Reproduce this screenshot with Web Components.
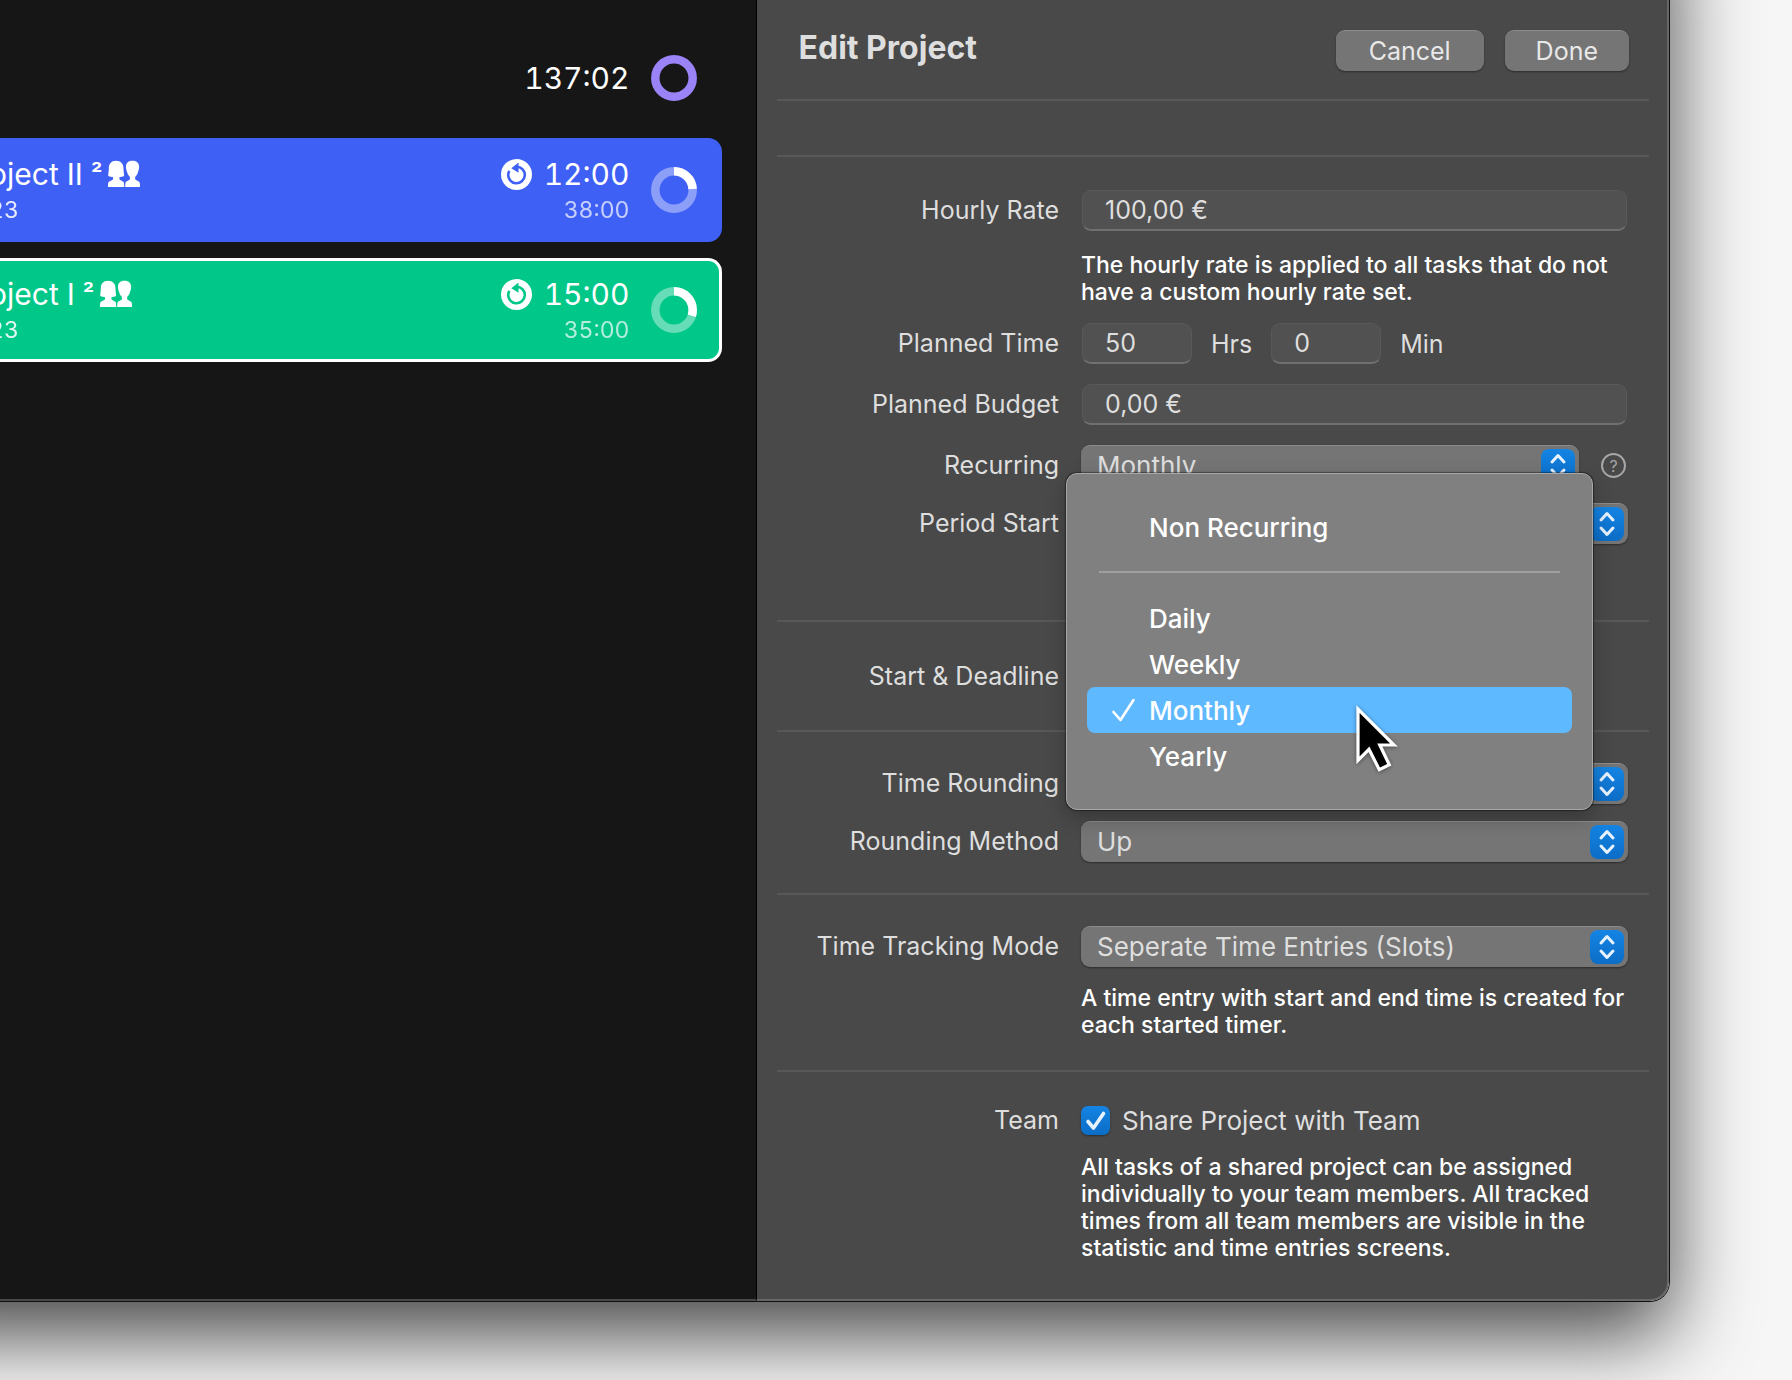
<!DOCTYPE html>
<html lang="en">
<head>
<meta charset="utf-8">
<title>Edit Project</title>
<style>
body {
  margin: 0;
  min-height: 100vh;
  overflow: hidden;
  background: #f6f6f6;
  color: #dedede;
  font-family: Inter, "Liberation Sans", sans-serif;
  font-size: 25px;
}
</style>
</head>
<body>
<app-window>
  <project-list slot="list">
    <total-time time="137:02"></total-time>
    <project-card name="oject II" count="²" date="23" time="12:00" left="38:00" progress="24" color="#3f60f5"></project-card>
    <project-card name="oject I" count="²" date="23" time="15:00" left="35:00" progress="30" color="#01c788" selected></project-card>
  </project-list>
  <edit-panel slot="panel" heading="Edit Project">
    <form-section class="blank"></form-section>
    <form-section class="rates">
      <text-row label="Hourly Rate" value="100,00 €">The hourly rate is applied to all tasks that do not have a custom hourly rate set.</text-row>
      <time-row label="Planned Time" hours="50" minutes="0"></time-row>
      <text-row label="Planned Budget" value="0,00 €"></text-row>
      <select-row label="Recurring" value="Monthly" help>
        <popup-menu slot="menu">
          <menu-item>Non Recurring</menu-item>
          <hr>
          <menu-item>Daily</menu-item>
          <menu-item>Weekly</menu-item>
          <menu-item checked>Monthly</menu-item>
          <menu-item>Yearly</menu-item>
        </popup-menu>
      </select-row>
      <select-row label="Period Start" value=""></select-row>
    </form-section>
    <form-section class="dates">
      <form-row label="Start &amp; Deadline"></form-row>
    </form-section>
    <form-section>
      <select-row label="Time Rounding" value=""></select-row>
      <select-row label="Rounding Method" value="Up"></select-row>
    </form-section>
    <form-section>
      <select-row label="Time Tracking Mode" value="Seperate Time Entries (Slots)">A time entry with start and end time is created for each started timer.</select-row>
    </form-section>
    <form-section class="team">
      <check-row label="Team" text="Share Project with Team">All tasks of a shared project can be assigned individually to your team members. All tracked times from all team members are visible in the statistic and time entries screens.</check-row>
    </form-section>
  </edit-panel>
</app-window>

<script>
class AppWindow extends HTMLElement {
  constructor() {
    super();
    this.attachShadow({ mode: 'open' }).innerHTML = `
<style>
/* the window runs past the top left corner of the screen */
:host {
  --bleed: 100px;
  display: grid;
  grid-template-columns: 857fr 913fr;
  margin: calc(0px - var(--bleed)) 122px 0 calc(0px - var(--bleed));
  border: 1px solid #111;
  border-width: 0 1px 1px 0;
  border-radius: 0 0 20px 20px;
  box-sizing: border-box;
  box-shadow: 0 33px 82px rgba(0, 0, 0, 0.72);
}

.list {
  padding: var(--bleed) 0 0 var(--bleed);
  background: #161616;
  border-right: 1px solid #000;
  border-bottom: 2px solid #484848;
}

.panel {
  padding-top: var(--bleed);
  background: #494949;
  border-right: 2px solid #666;
  border-bottom: 2px solid #666;
  border-radius: 0 0 19px 0;
}
</style>
<div class="list"><slot name="list"></slot></div>
<div class="panel"><slot name="panel"></slot></div>
`;
  }
}

class ProjectList extends HTMLElement {
  constructor() {
    super();
    this.attachShadow({ mode: 'open' }).innerHTML = `
<style>
:host {
  display: flex;
  flex-direction: column;
  gap: 16px;
  padding-right: 34px;
  color: #fff;
  font-variant-numeric: tabular-nums;
}
</style>
<slot></slot>
`;
  }
}

class ProgressRing extends HTMLElement {
  constructor() {
    super();
    this.attachShadow({ mode: 'open' });
  }

  connectedCallback() {
    const value = this.getAttribute('value');
    this.shadowRoot.innerHTML = `
<style>
:host {
  display: block;
  width: 46px;
  height: 46px;
}

svg {
  display: block;
  fill: none;
  stroke-width: 8.5;
}
</style>
<svg width="46" height="46" viewBox="0 0 46 46">
  <circle cx="23" cy="23" r="18.7" stroke="${this.getAttribute('track')}"/>
  <circle cx="23" cy="23" r="18.7" stroke="#fff" pathLength="100" stroke-dasharray="${value} 100" transform="rotate(-90 23 23)" ${value === '0' ? 'visibility="hidden"' : ''}/>
</svg>
`;
  }
}

class TotalTime extends HTMLElement {
  constructor() {
    super();
    this.attachShadow({ mode: 'open' });
  }

  connectedCallback() {
    this.shadowRoot.innerHTML = `
<style>
:host {
  display: flex;
  justify-content: flex-end;
  align-items: center;
  gap: 21px;
  padding: 55px 25px 21px;
  font-size: 30px;
}
</style>
<span>${this.getAttribute('time')}</span>
<progress-ring value="0" track="#9a83f7"></progress-ring>
`;
  }
}

class ProjectCard extends HTMLElement {
  constructor() {
    super();
    this.attachShadow({ mode: 'open' });
  }

  connectedCallback() {
    const attr = name => this.getAttribute(name);
    this.shadowRoot.innerHTML = `
<style>
:host {
  --card-color: ${attr('color')};
  display: flex;
  gap: 21px;
  box-sizing: border-box;
  height: 104px;
  padding: 14px 22px 0 0;
  border: 3px solid var(--card-color);
  border-left: none;
  border-radius: 0 14px 14px 0;
  background: var(--card-color);
}

:host([selected]) {
  border-color: #fff;
}

.project {
  flex: 1;
  /* scrolled slightly out of view */
  margin-left: -11px;
}

.times {
  text-align: right;
}

.main {
  display: flex;
  align-items: center;
  font-size: 30px;
  line-height: 38px;
}

.count {
  margin: 0 6px 0 8px;
  font-weight: 600;
  font-size: 25px;
}

.sub {
  font-size: 23px;
  line-height: 34px;
  opacity: 0.88;
}

.times .sub {
  opacity: 0.7;
}

.times svg {
  margin-right: 12px;
}

progress-ring {
  margin-top: 12px;
}
</style>
<div class="project">
  <div class="main">
    <span>${attr('name')}</span>
    <span class="count">${attr('count')}</span>
    <svg width="32" height="28" viewBox="0 0 32 28" fill="#fff">
      <path d="M8 .8C3.2.8.8 4 .8 8.500c0 3-.6 5.300-.6 7.500 1.800.9 3.600.9 4.800 1v2.500L.9 21.700C.2 22.200 0 23.500 0 27h16.200c0-3.500-.2-4.800-.9-5.300L11.500 19.500V17c1.200-.1 3-.1 4.600-1 0-2.200-.6-4.500-.6-7.500C15.500 4 13 .8 8 .8z"/>
      <path d="M24.500.8c-4.600 0-7 2.700-6.500 7 .1 1.800.8 3.500 1.300 4.900.5 1.900 1.400 3 2.600 4v2.800L18 21.700c-.6.500-.8 1.800-.8 5.300H32c0-3.500-.2-4.800-.9-5.300l-3.900-2.200v-2.800c1.200-1 2.100-2.100 2.600-4 .5-1.400 1.200-3.100 1.300-4.900.4-4.300-2-7-6.600-7z"/>
    </svg>
  </div>
  <div class="sub">${attr('date')}</div>
</div>
<div class="times">
  <div class="main">
    <svg width="31" height="31" viewBox="0 0 31 31">
      <circle cx="15.500" cy="15.500" r="15.500" fill="#fff"/>
      <circle cx="15.500" cy="16" r="8.300" fill="none" stroke="${attr('color')}" stroke-width="2.600" pathLength="100" stroke-dasharray="82 18" transform="rotate(-85 15.500 16)"/>
      <path d="M17.500 3.500v10.300L10.300 9.300z" fill="${attr('color')}"/>
    </svg>
    <span>${attr('time')}</span>
  </div>
  <div class="sub">${attr('left')}</div>
</div>
<progress-ring value="${attr('progress')}" track="rgba(255, 255, 255, 0.4)"></progress-ring>
`;
  }
}

class EditPanel extends HTMLElement {
  constructor() {
    super();
    this.attachShadow({ mode: 'open' });
  }

  connectedCallback() {
    this.shadowRoot.innerHTML = `
<style>
:host {
  display: block;
  padding: 0 18px 0 20px;
}

header {
  display: flex;
  gap: 21px;
  padding: 30px 20px 28px 22px;
  border-bottom: 2px solid #585858;
}

h1 {
  flex: 1;
  margin: 0;
  font-size: 32px;
  line-height: 36px;
  font-weight: 700;
}

button {
  height: 41px;
  padding: 0 33px;
  border: none;
  border-top: 1px solid #8c8c8c;
  border-radius: 9px;
  background: #757575;
  box-shadow: 0 1px 2px rgba(0, 0, 0, 0.4);
  color: #e8e8e8;
  font: inherit;
}

button:last-child {
  padding: 0 31px;
}
</style>
<header>
  <h1>${this.getAttribute('heading')}</h1>
  <button type="button">Cancel</button>
  <button type="button">Done</button>
</header>
<slot></slot>
`;
  }
}

class FormSection extends HTMLElement {
  constructor() {
    super();
    this.attachShadow({ mode: 'open' }).innerHTML = `
<style>
:host {
  display: flex;
  flex-direction: column;
  gap: 17px;
  padding: 31px 21px 31px 0;
  border-bottom: 2px solid #585858;
}

:host(.blank) {
  padding: 27px 0;
}

:host(.rates) {
  padding: 33px 21px 76px 0;
}

:host(.dates) {
  padding: 34px 21px 33px 0;
}

:host(.team) {
  padding: 28px 21px 37px 0;
  border-bottom: none;
}
</style>
<slot></slot>
`;
  }
}

// Base of all form rows: label on the left, control and hint on the right
class FormRow extends HTMLElement {
  constructor() {
    super();
    this.attachShadow({ mode: 'open' });
  }

  labelTag() {
    return `<label class="name" for="control">${this.getAttribute('label')}</label>`;
  }

  control() {
    return '';
  }

  connectedCallback() {
    const hint = [...this.childNodes].some(
      node => node.nodeType === Node.TEXT_NODE && node.data.trim()
    );
    this.shadowRoot.innerHTML = `
<style>
:host {
  display: grid;
  grid-template-columns: minmax(0, 282fr) minmax(0, 546fr);
  column-gap: 22px;
}

.name {
  text-align: right;
  line-height: 41px;
}

.field {
  position: relative;
  display: flex;
  align-items: center;
  height: 41px;
}

.hint {
  grid-column: 2;
  margin: 18px 0 0;
  color: #fff;
  font-size: 23px;
  line-height: 27px;
  font-weight: 500;
}

:host(text-row) .hint {
  margin-top: 21px;
}

:host(check-row) .hint {
  margin-top: 13px;
}

:host(time-row),
:host(text-row:not(:first-child)) {
  margin-bottom: 3px;
}

input[type="text"] {
  box-sizing: border-box;
  flex: 1;
  min-width: 0;
  height: 41px;
  margin: 0 1px;
  padding: 0 22px;
  border: 1px solid #595959;
  border-bottom: 2px solid #707070;
  border-radius: 9px;
  background: #515151;
  color: #dedede;
  font: inherit;
}
</style>
${this.labelTag()}
<div class="field">${this.control()}</div>
${hint ? '<p class="hint"><slot></slot></p>' : ''}
`;
  }
}

class StaticRow extends FormRow {
  labelTag() {
    return `<span class="name">${this.getAttribute('label')}</span>`;
  }
}

class TextRow extends FormRow {
  control() {
    return `<input type="text" id="control" value="${this.getAttribute('value')}">`;
  }
}

class TimeRow extends FormRow {
  control() {
    return `
<style>
.field input[type="text"] {
  flex: 0 0 110px;
}

.unit {
  margin: 0 18px;
}
</style>
<input type="text" id="control" value="${this.getAttribute('hours')}">
<label class="unit" for="control">Hrs</label>
<input type="text" id="minutes" value="${this.getAttribute('minutes')}">
<label class="unit" for="minutes">Min</label>
`;
  }
}

class SelectRow extends FormRow {
  control() {
    const help = this.hasAttribute('help') ? '<button type="button" class="help">?</button>' : '';
    return `
<style>
.select {
  display: grid;
  grid-template-columns: minmax(0, 1fr) 38px;
  align-items: center;
  flex: 1;
}

select {
  grid-area: 1 / 1 / 2 / 3;
  appearance: none;
  box-sizing: border-box;
  width: 100%;
  height: 41px;
  padding: 0 44px 2px 16px;
  border: none;
  border-top: 1px solid #8c8c8c;
  border-radius: 9px;
  background: #757575;
  box-shadow: 0 1px 2px rgba(0, 0, 0, 0.4);
  color: #dedede;
  font: inherit;
  font-size: 26px;
}

.select svg {
  grid-area: 1 / 2;
  pointer-events: none;
}

.help {
  width: 25px;
  height: 25px;
  margin: 0 2px 0 22px;
  padding: 0;
  border: 2px solid #a6a6a6;
  border-radius: 50%;
  background: none;
  color: #a6a6a6;
  font: inherit;
  font-size: 16px;
  line-height: 20px;
}
</style>
<div class="select">
  <select id="control"><option>${this.getAttribute('value')}</option></select>
  <svg width="34" height="34" viewBox="0 0 34 34">
    <defs>
      <linearGradient id="blue" x2="0" y2="1">
        <stop stop-color="#1484e4"/>
        <stop offset="1" stop-color="#0c6dc6"/>
      </linearGradient>
    </defs>
    <rect width="34" height="34" rx="8" fill="url(#blue)"/>
    <path d="M11 13l6-6.500 6 6.500M11 21l6 6.500 6-6.500" fill="none" stroke="#e6f2ff" stroke-width="3" stroke-linecap="round" stroke-linejoin="round"/>
  </svg>
</div>
${help}
<slot name="menu"></slot>
`;
  }
}

class CheckRow extends FormRow {
  control() {
    return `
<style>
.box {
  display: grid;
  margin-right: 12px;
}

.box > * {
  grid-area: 1 / 1;
}

input[type="checkbox"] {
  appearance: none;
  width: 29px;
  height: 29px;
  margin: 0;
  border-radius: 7px;
  background: linear-gradient(#1484e4, #0c6dc6);
  box-shadow: 0 1px 2px rgba(0, 0, 0, 0.4);
}

.box svg {
  pointer-events: none;
}

.text {
  font-size: 26px;
}
</style>
<span class="box">
  <input type="checkbox" id="control" checked>
  <svg width="29" height="29" viewBox="0 0 29 29">
    <path d="M7 15.500l5.500 6.500L22.500 7.500" fill="none" stroke="#e6f2ff" stroke-width="3.600" stroke-linecap="round" stroke-linejoin="round"/>
  </svg>
</span>
<label class="text" for="control">${this.getAttribute('text')}</label>
`;
  }
}

class PopupMenu extends HTMLElement {
  constructor() {
    super();
    this.attachShadow({ mode: 'open' }).innerHTML = `
<style>
:host {
  position: absolute;
  z-index: 10;
  top: 28px;
  left: -15px;
  right: 35px;
  padding: 30px 20px;
  border: 1px solid #a8a8a8;
  border-radius: 11px;
  background: #808080;
  box-shadow: 0 0 1px 1px rgba(0, 0, 0, 0.4), 0 8px 20px rgba(0, 0, 0, 0.25);
  color: #fff;
}

::slotted(hr) {
  margin: 21px 12px 22px;
  border: none;
  border-top: 2px solid #a0a0a0;
}

.cursor {
  position: absolute;
  top: 230px;
  left: 289px;
  filter: drop-shadow(0 1px 2px rgba(0, 0, 0, 0.4));
}
</style>
<slot></slot>
<svg class="cursor" width="44" height="70" viewBox="0 0 44 70">
  <path d="M2 5v51.300l11-11 10.300 20.400 10-5L23.800 41H38z" fill="#000" stroke="#fff" stroke-width="3.200"/>
</svg>
`;
  }
}

class MenuItem extends HTMLElement {
  constructor() {
    super();
    this.attachShadow({ mode: 'open' }).innerHTML = `
<style>
:host {
  display: block;
}

button {
  display: flex;
  align-items: center;
  width: 100%;
  height: 46px;
  padding: 0 24px;
  border: none;
  border-radius: 8px;
  background: none;
  color: #fff;
  font: inherit;
  font-size: 26px;
  font-weight: 500;
}

:host([checked]) button {
  background: #5fb9ff;
}

svg {
  margin-right: 13px;
  visibility: hidden;
}

:host([checked]) svg {
  visibility: visible;
}
</style>
<button type="button">
  <svg width="25" height="26" viewBox="0 0 25 26">
    <path d="M2.500 15l7 8L22.500 3" fill="none" stroke="#fff" stroke-width="2.600" stroke-linecap="round" stroke-linejoin="round"/>
  </svg>
  <slot></slot>
</button>
`;
  }
}

customElements.define('progress-ring', ProgressRing);
customElements.define('total-time', TotalTime);
customElements.define('project-card', ProjectCard);
customElements.define('project-list', ProjectList);
customElements.define('menu-item', MenuItem);
customElements.define('popup-menu', PopupMenu);
customElements.define('form-row', StaticRow);
customElements.define('text-row', TextRow);
customElements.define('time-row', TimeRow);
customElements.define('select-row', SelectRow);
customElements.define('check-row', CheckRow);
customElements.define('form-section', FormSection);
customElements.define('edit-panel', EditPanel);
customElements.define('app-window', AppWindow);
</script>
</body>
</html>
